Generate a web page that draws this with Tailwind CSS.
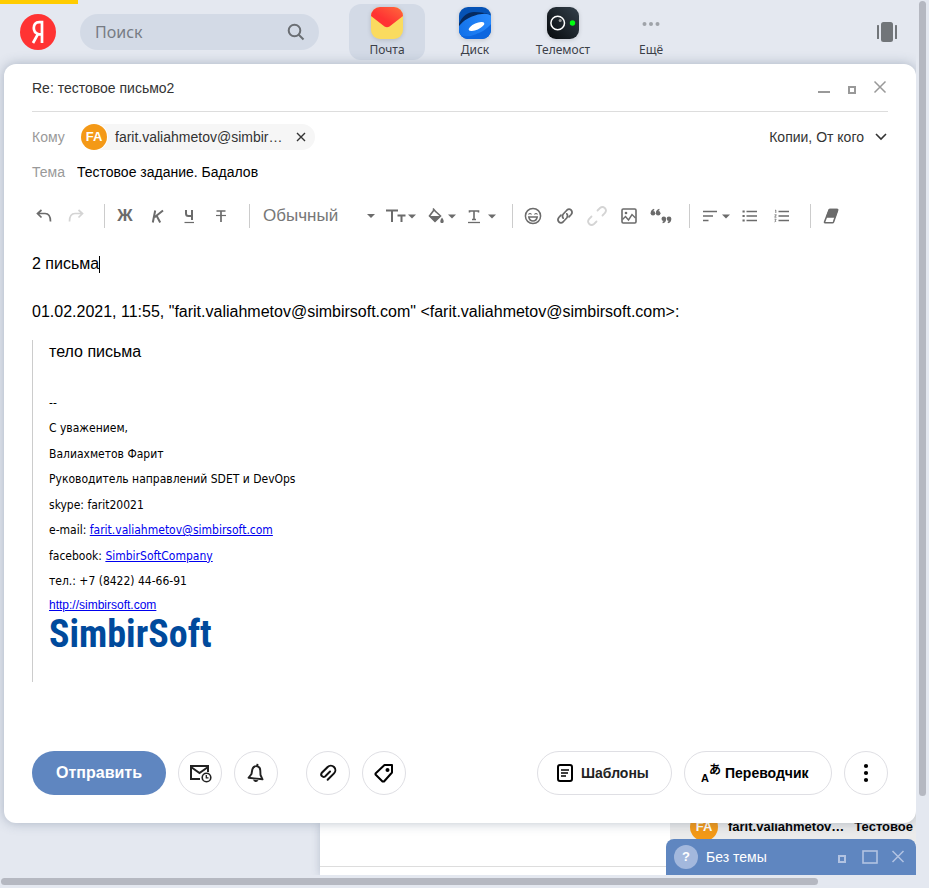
<!DOCTYPE html>
<html lang="ru">
<head>
<meta charset="utf-8">
<meta name="viewport" content="width=device-width, initial-scale=1">
<title>Почта</title>
<script src="https://cdn.jsdelivr.net/npm/@tailwindcss/browser@4"></script>
</head>
<body class="bg-[#e4e8f0] font-['Liberation_Sans',Arial,sans-serif] text-[#333]">
<div class="grid min-h-screen grid-cols-[minmax(0,1fr)_13px] grid-rows-[1fr_13px]">

  <div class="relative flex flex-col overflow-hidden">
    <header class="flex h-16 shrink-0 items-start font-['Noto_Sans',sans-serif]">
      <div class="absolute left-0 top-0 h-1 w-[78px] bg-[#ffcc00]"></div>
      <a href="#" aria-label="Яндекс" class="ml-5 mt-3.5 block size-9">
        <svg viewBox="0 0 36 36" class="size-9"><circle cx="18" cy="18" r="18" fill="#f33"/><path d="M22 29V8.200H19.300C15.300 8.200 13.800 11 13.800 14C13.800 17 15.300 19 18 20L13 29M22 20.300H18" fill="none" stroke="#fff" stroke-width="2.700"/></svg>
      </a>
      <label class="ml-6 mt-3.5 flex h-9 w-[239px] items-center rounded-full bg-[#d3dae6] pl-[15px] pr-3.5">
        <input type="search" placeholder="Поиск" aria-label="Поиск" class="min-w-0 flex-1 bg-transparent text-base outline-none placeholder:text-[#777c84]">
        <svg viewBox="0 0 18 18" class="size-[18px]" fill="none" stroke="#6a6e73" stroke-width="2"><circle cx="7.500" cy="7.500" r="5.800"/><path d="M11.500 11.500L16.500 16.500"/></svg>
      </label>
      <nav class="ml-[30px] mt-1 flex gap-3 text-xs text-[#3c4048]">
        <a href="#" class="flex h-14 w-[76px] flex-col items-center rounded-xl bg-[#d3dae6] pt-[3px]">
          <svg viewBox="0 0 32 32" class="size-8 overflow-visible drop-shadow-sm"><defs><linearGradient id="m" x1="0" y1="1" x2="1" y2="0"><stop offset=".4" stop-color="#f33"/><stop offset="1" stop-color="#ff6a3c"/></linearGradient></defs><rect width="32" height="32" rx="9" fill="#fadb5f"/><path d="M0 9A9 9 0 0 1 9 0H23A9 9 0 0 1 32 9L18.500 19.500Q16 21 13.500 19.500Z" fill="url(#m)"/></svg>
          <span class="mt-[3px] leading-4">Почта</span>
        </a>
        <a href="#" class="flex h-14 w-[76px] flex-col items-center pt-[3px]">
          <svg viewBox="0 0 32 32" class="size-8 overflow-visible drop-shadow-sm"><defs><clipPath id="r"><rect width="32" height="32" rx="9"/></clipPath><linearGradient id="d"><stop stop-color="#1170e8"/><stop offset="1" stop-color="#2a8cff"/></linearGradient></defs><g clip-path="url(#r)"><rect width="32" height="32" fill="#0552b5"/><path d="M0 17C3 9 9 5 15 5C21 5 27 6 32 8L16 12L0 22Z" fill="#052a60"/><path d="M6 32Q24 27 32 14V32Z" fill="#0c66df"/><path d="M0 32V20L20 28L14 32Z" fill="#0c66df"/><ellipse cx="16" cy="18" rx="19" ry="9" transform="rotate(-24 16 18)" fill="url(#d)"/><ellipse cx="17.500" cy="19.500" rx="8.500" ry="3.200" transform="rotate(-24 17.500 19.500)" fill="#fff"/></g></svg>
          <span class="mt-[3px] leading-4">Диск</span>
        </a>
        <a href="#" class="flex h-14 w-[76px] flex-col items-center pt-[3px]">
          <svg viewBox="0 0 32 32" class="size-8 overflow-visible drop-shadow-sm"><defs><linearGradient id="t" x1="0" y1="1" x2="1" y2="0"><stop stop-color="#06090c"/><stop offset="1" stop-color="#34404b"/></linearGradient></defs><rect width="32" height="32" rx="9" fill="url(#t)"/><circle cx="10.700" cy="16" r="6.800" fill="none" stroke="#fff" stroke-width="1.500"/><circle cx="13.200" cy="13.500" r="1.500" fill="#999"/><circle cx="25.500" cy="16" r="2.700" fill="#0f1"/></svg>
          <span class="mt-[3px] leading-4">Телемост</span>
        </a>
        <a href="#" class="flex h-14 w-[76px] flex-col items-center pt-[3px]">
          <svg viewBox="0 0 32 32" class="size-8" fill="#9fa3a9"><circle cx="9.500" cy="17" r="2"/><circle cx="16" cy="17" r="2"/><circle cx="22.500" cy="17" r="2"/></svg>
          <span class="mt-[3px] leading-4">Ещё</span>
        </a>
      </nav>
      <button aria-label="Вид" class="ml-auto mr-[19px] mt-[22px]">
        <svg viewBox="0 0 20 20" class="size-5" fill="#717579"><rect x="4" width="12" height="20" rx="2.500"/><rect y="3" width="2" height="14" rx=".5"/><rect x="18" y="3" width="2" height="14" rx=".5"/></svg>
      </button>
    </header>

    <main class="z-10 ml-1 flex flex-1 flex-col rounded-xl bg-white px-7 shadow-[0_0_12px_rgba(60,80,110,0.35)]">
      <div class="flex h-12 items-center border-b border-[#ddd] text-sm">
        <h1 class="flex-1">Re: тестовое письмо2</h1>
        <div class="flex gap-2">
          <button aria-label="Свернуть"><svg viewBox="0 0 20 20" class="size-5" stroke="#999" stroke-width="2"><path d="M4 14H16"/></svg></button>
          <button aria-label="Уменьшить"><svg viewBox="0 0 20 20" class="size-5" fill="none" stroke="#999" stroke-width="2"><rect x="7" y="9" width="6" height="6"/></svg></button>
          <button aria-label="Закрыть" class="-mr-0.5"><svg viewBox="0 0 20 20" class="size-5" fill="none" stroke="#999" stroke-width="1.500"><path d="M4.500 3.500L15.500 14.500M15.500 3.500L4.500 14.500"/></svg></button>
        </div>
      </div>

      <div class="mt-3 flex h-[26px] items-center text-sm">
        <span class="w-12 text-[#999]">Кому</span>
        <div class="ml-px flex h-[26px] w-[234px] items-center rounded-full bg-[#f6f6f6] pr-2">
          <span class="grid size-[26px] place-items-center rounded-full bg-[#f49917] text-[13px] font-bold text-white ring-1 ring-white">FA</span>
          <span class="ml-2 flex-1 whitespace-nowrap">farit.valiahmetov@simbir…</span>
          <button aria-label="Удалить адресата"><svg viewBox="0 0 12 12" class="size-3" stroke="#333" stroke-width="1.400"><path d="M2 2L10 10M10 2L2 10"/></svg></button>
        </div>
        <button class="ml-auto flex items-center gap-2.5">Копии, От кого<svg viewBox="0 0 14 14" class="size-3.5" fill="none" stroke="#333" stroke-width="1.600"><path d="M2 4L7 9L12 4"/></svg></button>
      </div>
      <div class="mt-3 flex h-5 items-center text-sm">
        <label for="subj" class="w-[45px] text-[#999]">Тема</label>
        <input id="subj" value="Тестовое задание. Бадалов" class="min-w-0 flex-1 text-black outline-none">
      </div>

      <div role="toolbar" aria-label="Форматирование" class="-ml-1 mt-[18px] flex h-8 items-center text-[#6b6b6b]">
        <button aria-label="Отменить"><svg viewBox="0 0 32 24" class="h-6 w-8" fill="none" stroke="currentColor" stroke-width="1.700"><path d="M13.500 6L9.500 9.500L13.500 13.500M9.500 9.500H17Q22.500 9.500 22.500 17.500"/></svg></button>
        <button aria-label="Повторить" class="text-[#d4d4d4]"><svg viewBox="0 0 32 24" class="h-6 w-8" fill="none" stroke="currentColor" stroke-width="1.700"><path d="M18.500 6L22.500 9.500L18.500 13.500M22.500 9.500H15Q9.500 9.500 9.500 17.500"/></svg></button>
        <span class="ml-3 mr-1 h-6 w-px bg-[#ccc]"></span>
        <button class="w-8 text-[17px] font-bold leading-6">Ж</button>
        <button aria-label="Курсив"><svg viewBox="0 0 32 24" class="h-6 w-8" fill="none" stroke="currentColor" stroke-width="2"><path d="M14.200 6.500L11.800 18.500M22 6.500L13.500 13.200M15.500 11.500L19.200 18.500"/></svg></button>
        <button aria-label="Подчёркнутый"><svg viewBox="0 0 32 24" class="h-6 w-8" fill="none" stroke="currentColor" stroke-width="2"><path d="M13 6V9.500Q13 12 15.500 12H19M19 6V16"/><path d="M11.500 18.500H21" stroke-width="1.200"/></svg></button>
        <button aria-label="Зачёркнутый"><svg viewBox="0 0 32 24" class="h-6 w-8" fill="none" stroke="currentColor"><path d="M11.500 7H20.500M16 7V18" stroke-width="1.700"/><path d="M11 11.500H21" stroke-width="1.200"/></svg></button>
        <span class="ml-3 mr-1 h-6 w-px bg-[#ccc]"></span>
        <span class="relative flex w-[126px] items-center">
          <select aria-label="Стиль текста" class="w-full appearance-none bg-transparent pl-[9px] text-[17px] leading-6 text-[#777] outline-none"><option>Обычный</option></select>
          <svg viewBox="0 0 8 4" class="pointer-events-none absolute right-[5px] h-1 w-2" fill="currentColor"><path d="M0 0H8L4 4Z"/></svg>
        </span>
        <button aria-label="Размер"><svg viewBox="0 0 40 24" class="h-6 w-10" fill="none" stroke="currentColor" stroke-width="2"><path d="M6 6.500H18M12 6.500V18M17.500 11.500H25.500M21.500 11.500V18"/><path d="M28 10.500H36L32 14.500Z" fill="currentColor" stroke="none"/></svg></button>
        <button aria-label="Цвет фона"><svg viewBox="0 0 40 24" class="h-6 w-10"><path d="M14 6L20.500 12L15 17.300L9.500 12ZM13 4.500L16 8" fill="none" stroke="currentColor" stroke-width="1.600"/><path d="M9.500 12H20.500L15 17.500Z" fill="currentColor"/><path d="M22 13.500C24.500 17 24 19 22 19S19.500 17 22 13.500Z" fill="currentColor"/><path d="M28 10.500H36L32 14.500Z" fill="currentColor"/></svg></button>
        <button aria-label="Цвет текста"><svg viewBox="0 0 40 24" class="h-6 w-10" fill="none" stroke="currentColor"><path d="M9.500 8.500V7H18.500V8.500M14 7V15.500M12 15.500H16" stroke-width="1.600"/><path d="M8 18.500H20" stroke-width="1.300"/><path d="M28 10.500H36L32 14.500Z" fill="currentColor" stroke="none"/></svg></button>
        <span class="ml-3 mr-1 h-6 w-px bg-[#ccc]"></span>
        <button aria-label="Эмодзи"><svg viewBox="0 0 32 24" class="h-6 w-8" fill="none" stroke="currentColor" stroke-width="1.500"><circle cx="16" cy="12" r="7.600"/><path d="M11.500 10.500Q13 8.500 14.500 10.500M17.500 10.500Q19 8.500 20.500 10.500" stroke-width="1.200"/><path d="M11.800 13H20.200Q19.500 17 16 17T11.800 13Z"/></svg></button>
        <button aria-label="Ссылка"><svg viewBox="0 0 32 24" class="h-6 w-8" fill="none" stroke="currentColor" stroke-width="1.700" stroke-linecap="round"><path d="M14.200 14.200Q12.600 12 14.300 10L18 6Q20 4.200 22.100 6Q24 8.200 22.200 10.500L20 12.800"/><path d="M17.800 9.800Q19.400 12 17.700 14L14 18Q12 19.800 9.900 18Q8 15.800 9.800 13.500L12 11.200"/></svg></button>
        <button aria-label="Убрать ссылку" class="text-[#d4d4d4]"><svg viewBox="0 0 32 24" class="h-6 w-8" fill="none" stroke="currentColor" stroke-width="1.800" stroke-linecap="round"><path d="M16.500 6.500L19 4Q21.500 2 24 4.200Q26 6.500 24 9L21.500 11.500"/><path d="M10.500 12.500L8 15Q6 17.500 8.200 20Q10.500 22 13 20L15.500 17.500"/></svg></button>
        <button aria-label="Изображение"><svg viewBox="0 0 32 24" class="h-6 w-8" fill="none" stroke="currentColor" stroke-width="1.600"><rect x="9" y="5" width="14" height="14" rx="1.200"/><path d="M9.500 15.500L12.500 12.500L15.500 16L19 10.500L22.500 14" stroke-width="1.400"/><circle cx="13" cy="9" r="1.300" fill="currentColor" stroke="none"/></svg></button>
        <button aria-label="Цитата"><svg viewBox="0 0 32 24" class="h-6 w-8" fill="currentColor"><g id="q"><circle cx="8" cy="9.300" r="2.300"/><path d="M5.700 9.300Q5.500 5.800 9 4.700L9.400 5.900Q7.700 6.800 7.800 8.200Z"/></g><use href="#q" x="5.200"/><g transform="rotate(180 16 12)"><use href="#q"/><use href="#q" x="5.200"/></g></svg></button>
        <span class="ml-3 mr-1 h-6 w-px bg-[#ccc]"></span>
        <button aria-label="Выравнивание"><svg viewBox="0 0 40 24" class="h-6 w-10" fill="none" stroke="currentColor" stroke-width="1.700"><path d="M9 7.500H23M9 12H19M9 16.500H14.500"/><path d="M28 10.500H36L32 14.500Z" fill="currentColor" stroke="none"/></svg></button>
        <button aria-label="Маркированный список"><svg viewBox="0 0 32 24" class="h-6 w-8" fill="none" stroke="currentColor" stroke-width="1.700"><path d="M12.500 7.500H23M12.500 12H23M12.500 16.500H23"/><path d="M8.500 7.500H10.700M8.500 12H10.700M8.500 16.500H10.700" stroke-width="2.200"/></svg></button>
        <button aria-label="Нумерованный список"><svg viewBox="0 0 32 24" class="h-6 w-8" fill="none" stroke="currentColor" stroke-width="1.700"><path d="M12.500 7.500H23M12.500 12H23M12.500 16.500H23"/><path d="M9 6.500L9.800 6V9M8.500 10.800H10.300L8.700 13.200H10.500M8.500 15.200H10.200L9.300 16.200Q10.800 17.500 8.500 17.900" stroke-width=".8"/></svg></button>
        <span class="ml-3 mr-1 h-6 w-px bg-[#ccc]"></span>
        <button aria-label="Очистить форматирование"><svg viewBox="0 0 32 24" class="h-6 w-8" fill="none" stroke="currentColor" stroke-width="1.600" stroke-linejoin="round"><path d="M15 5.500H22Q22.800 5.500 22.500 6.500L18.500 18Q18.200 18.700 17.500 18.700H10Q9.300 18.700 9.600 17.700L14 6.300Q14.300 5.500 15 5.500Z"/><path d="M14.500 5.500H22.500L19.800 13H11.800Z" fill="currentColor"/></svg></button>
      </div>

      <div role="textbox" aria-multiline="true" aria-label="Текст письма" class="mt-5 flex-1 text-base leading-6 text-black">
        <p class="flex items-center">2 письма<span class="h-[17px] w-px bg-black"></span></p>
        <p class="mt-6">01.02.2021, 11:55, "farit.valiahmetov@simbirsoft.com" &lt;farit.valiahmetov@simbirsoft.com&gt;:</p>
        <blockquote class="mt-4 border-l border-[#ccc] pb-7 pl-4">
          <p>тело письма</p>
          <div class="mt-[26px] grid h-[204px] auto-rows-fr items-center font-[Tahoma,'DejaVu_Sans_Condensed',sans-serif] text-xs">
            <p>--</p>
            <p>С уважением,</p>
            <p>Валиахметов Фарит</p>
            <p>Руководитель направлений SDET и DevOps</p>
            <p>skype: farit20021</p>
            <p>e-mail: <a href="#" class="text-[#0000ee] underline">farit.valiahmetov@simbirsoft.com</a></p>
            <p>facebook: <a href="#" class="text-[#0000ee] underline">SimbirSoftCompany</a></p>
            <p>тел.: +7 (8422) 44-66-91</p>
          </div>
          <p class="mt-0.5 text-xs leading-[18px]"><a href="#" class="text-[#0000ee] underline">http://simbirsoft.com</a></p>
          <p class="font-['Roboto_Condensed','Roboto',sans-serif] text-[38px] font-bold leading-10 text-[#004a9c]">SimbirSoft</p>
        </blockquote>
      </div>

      <div class="mb-7 flex gap-3 text-sm font-bold text-black">
        <button class="h-11 w-[134px] rounded-full bg-[#5f86c0] text-base text-white">Отправить</button>
        <button aria-label="Отправить позже" class="grid size-11 place-items-center rounded-full border border-[#dfdfe4]"><svg viewBox="0 0 24 24" class="size-6" fill="none" stroke="#222" stroke-width="2"><path d="M12 18H3V5H20V11M3 6L11.500 12L20 6"/><circle cx="18.500" cy="16.500" r="4.300" fill="#fff" stroke-width="1.600"/><path d="M18.300 14V16.800H20.500" stroke-width="1.300"/></svg></button>
        <button aria-label="Уведомить" class="grid size-11 place-items-center rounded-full border border-[#dfdfe4]"><svg viewBox="0 0 24 24" class="size-6" fill="none" stroke="#222" stroke-width="1.900" stroke-linejoin="round"><path d="M4.500 16.800L7.500 13L8.300 8.500Q9.300 4.800 13 5.200Q16.300 6 16.300 9.500L16.500 14L18.500 18.300Z"/><path d="M13.500 2.800L13.200 5.500"/><path d="M9 18.500L14.500 19.200Q13.500 21.200 11.500 20.900T9 18.500Z" fill="#222" stroke="none"/></svg></button>
        <button aria-label="Прикрепить файл" class="ml-4 grid size-11 place-items-center rounded-full border border-[#dfdfe4]"><svg viewBox="0 0 24 24" class="size-6" fill="none" stroke="#111" stroke-width="2" stroke-linecap="round"><path transform="rotate(45 12 12)" d="M16.500 17V8A4.500 4.500 0 0 0 7.500 8V16.500A2.500 2.500 0 0 0 12.400 16.500V9.500"/></svg></button>
        <button aria-label="Метка" class="grid size-11 place-items-center rounded-full border border-[#dfdfe4]"><svg viewBox="0 0 24 24" class="size-6" fill="none" stroke="#000" stroke-width="2" stroke-linejoin="round"><path d="M12.500 4H20V11.500L12 20.500H10.500L3.500 13.500V12.500Z"/><circle cx="15.500" cy="9" r="2" fill="#000" stroke="none"/></svg></button>
        <button class="ml-auto flex h-11 w-[135px] items-center gap-[7px] rounded-full border border-[#dfdfe4] pl-[18px] text-[#222]"><svg viewBox="0 0 18 20" class="h-5 w-[18px]" fill="none" stroke="#000" stroke-width="2"><rect x="2" y="2" width="14" height="16" rx="2"/><path d="M5 7H13M5 10H12M5 13H10" stroke-width="1.500"/></svg>Шаблоны</button>
        <button class="flex h-11 w-[148px] items-center gap-1 rounded-full border border-[#dfdfe4] pl-4"><svg viewBox="0 0 20 32" class="h-8 w-5"><text x="0" y="25" font-size="11" font-weight="700">A</text><text x="8" y="17" font-size="12" font-weight="700" font-family="Noto Sans CJK JP">あ</text></svg>Переводчик</button>
        <button aria-label="Ещё" class="grid size-11 place-items-center rounded-full border border-[#dfdfe4]"><svg viewBox="0 0 24 24" class="size-6"><circle cx="12" cy="5" r="2.100"/><circle cx="12" cy="12" r="2.100"/><circle cx="12" cy="19" r="2.100"/></svg></button>
      </div>
    </main>

    <section aria-label="Список писем" class="relative ml-[320px] flex h-[52px] shrink-0 justify-end bg-white shadow-[0_0_8px_rgba(60,80,110,0.25)]">
      <div class="mb-2 flex-1 border-b border-[#ddd]"></div>
      <div class="-mt-3 flex h-8 w-[246px] items-center overflow-hidden whitespace-nowrap bg-[#ebebeb] pl-5 text-[13px] font-bold text-black">
        <span class="grid size-7 shrink-0 place-items-center rounded-full bg-[#f49917] text-white">FA</span>
        <span class="ml-2.5">farit.valiahmetov…</span>
        <span class="ml-2.5">Тестовое</span>
      </div>
      <div class="absolute bottom-0 right-0 flex h-9 w-[250px] items-center rounded-t-lg bg-[#5f86c0] pl-2 pr-2 text-sm text-white">
        <span class="grid size-6 place-items-center rounded-full bg-[#a3b8dd] text-[13px] font-bold">?</span>
        <span class="ml-2 flex-1">Без темы</span>
        <button aria-label="Уменьшить"><svg viewBox="0 0 20 20" class="size-5" fill="none" stroke="#b2c3e2" stroke-width="2"><rect x="7" y="9" width="6" height="6"/></svg></button>
        <button aria-label="Развернуть" class="ml-2"><svg viewBox="0 0 20 20" class="size-5" fill="none" stroke="#b2c3e2" stroke-width="1.600"><rect x="3" y="4" width="14" height="12"/></svg></button>
        <button aria-label="Закрыть" class="ml-2"><svg viewBox="0 0 20 20" class="size-5" stroke="#b2c3e2" stroke-width="1.500"><path d="M4.500 4L15.500 15M15.500 4L4.500 15"/></svg></button>
      </div>
    </section>
  </div>

  <div aria-hidden="true" class="z-20 bg-[#e4e8f0] px-[3px] pt-px"><div class="h-[91%] rounded-full bg-[#b5b8c1]"></div></div>
  <div aria-hidden="true" class="z-20 col-span-2 bg-[#e4e8f0] py-[3px] pl-px"><div class="h-[7px] w-[88%] rounded-full bg-[#b5b8c1]"></div></div>
</div>
</body>
</html>
